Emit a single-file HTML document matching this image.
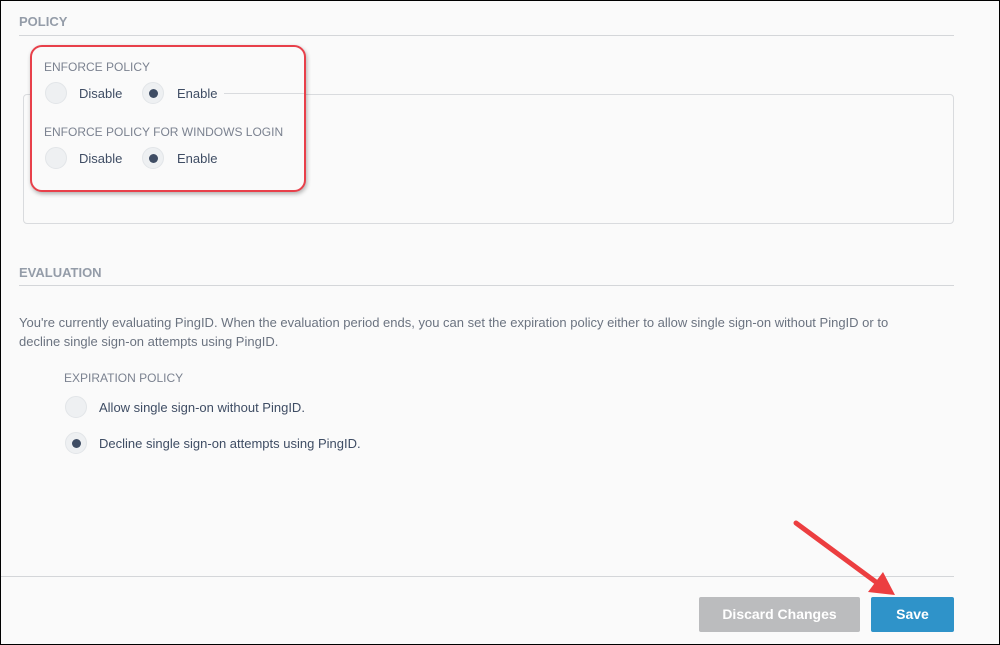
<!DOCTYPE html>
<html><head><style>
body{margin:0;width:1000px;height:645px;background:#fafafa;font-family:"Liberation Sans",sans-serif;position:relative;overflow:hidden}
.frame{position:absolute;left:0;top:0;width:998px;height:643px;border:1px solid #000;}
.a{position:absolute;white-space:nowrap}
.h{font-size:13px;font-weight:bold;color:#949ca8}
.hr{position:absolute;height:1px;background:#d4d6d9}
.lab{font-size:12px;color:#7b8290}
.r{position:absolute;width:22px;height:22px;border-radius:50%;background:#eef0f2;border:1px solid #e2e5e8;box-sizing:border-box}
.r.on::after{content:"";position:absolute;left:6px;top:6px;width:9px;height:9px;border-radius:50%;background:#3f4d64}
.t{font-size:13px;color:#3f4d64}
</style></head><body>
<div class="frame"></div>
<div class="a h" style="left:19px;top:14px">POLICY</div>
<div class="hr" style="left:19px;top:35px;width:935px"></div>
<div class="a" style="left:23px;top:94px;width:929px;height:128px;border:1px solid #d9dbde;border-radius:4px"></div>
<div class="a" style="left:30px;top:45px;width:272px;height:143px;border:2.5px solid #e8404a;border-radius:12px;background:#fafafa;box-shadow:1px 2px 4px rgba(0,0,0,.3)"></div>
<div class="a" style="left:224px;top:93px;width:80px;height:1px;background:#d9dbde"></div>
<div class="a lab" style="left:44px;top:60px">ENFORCE POLICY</div>
<div class="r" style="left:45px;top:82px"></div><div class="a t" style="left:79px;top:86px">Disable</div>
<div class="r on" style="left:142px;top:82px"></div><div class="a t" style="left:177px;top:86px">Enable</div>
<div class="a lab" style="left:44px;top:125px">ENFORCE POLICY FOR WINDOWS LOGIN</div>
<div class="r" style="left:45px;top:147px"></div><div class="a t" style="left:79px;top:151px">Disable</div>
<div class="r on" style="left:142px;top:147px"></div><div class="a t" style="left:177px;top:151px">Enable</div>
<div class="a h" style="left:19px;top:265px">EVALUATION</div>
<div class="hr" style="left:19px;top:285px;width:935px"></div>
<div class="a" style="left:19px;top:313px;font-size:13px;color:#6b7380;line-height:19px;white-space:normal;width:930px">You're currently evaluating PingID. When the evaluation period ends, you can set the expiration policy either to allow single sign-on without PingID or to<br>decline single sign-on attempts using PingID.</div>
<div class="a lab" style="left:64px;top:371px">EXPIRATION POLICY</div>
<div class="r" style="left:65px;top:396px"></div><div class="a t" style="left:99px;top:400px">Allow single sign-on without PingID.</div>
<div class="r on" style="left:65px;top:432px"></div><div class="a t" style="left:99px;top:436px">Decline single sign-on attempts using PingID.</div>
<div class="hr" style="left:1px;top:576px;width:953px"></div>
<div class="a" style="left:699px;top:597px;width:161px;height:35px;background:#bbbcbe;border-radius:2px;color:#fff;font-size:14px;font-weight:bold;text-align:center;line-height:35px">Discard Changes</div>
<div class="a" style="left:871px;top:597px;width:83px;height:35px;background:#2f93c9;border-radius:2px;color:#fff;font-size:14px;font-weight:bold;text-align:center;line-height:35px">Save</div>
<svg class="a" style="left:0;top:0" width="1000" height="645"><line x1="796" y1="523" x2="880" y2="585" stroke="#ec3e40" stroke-width="5" stroke-linecap="round"/><polygon points="895,595 868,592 883,572" fill="#ec3e40"/></svg>
</body></html>
